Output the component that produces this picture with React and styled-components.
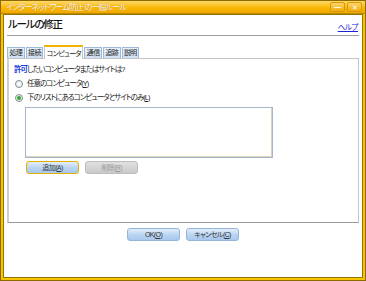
import React from "react";
import styled, { createGlobalStyle, css } from "styled-components";

const Global = createGlobalStyle`
  html, body { margin: 0; padding: 0; background: #fff; }
  * { box-sizing: border-box; }
  body {
    font-family: "Liberation Sans", "Noto Sans CJK JP", sans-serif;
    font-feature-settings: "palt";
  }
`;

const Frame = styled.div`
  width: 366px;
  height: 281px;
  display: flex;
  flex-direction: column;
  background: #f6c400;
  border: 1px solid #8d6a00;
  padding: 0 2px 2px 2px;
`;

const TitleBar = styled.div`
  height: 13px;
  display: flex;
  align-items: center;
  justify-content: space-between;
  margin: 0 -2px;
  padding: 0 3px 0 5px;
  background: linear-gradient(#ffd86a, #f9b600 60%, #f2a800);
  border-bottom: 1px solid #b88a00;
`;

const TitleText = styled.span`
  font-size: 8px;
  line-height: 13px;
  color: #fff;
  text-shadow: 0 0 1px #b07000;
  letter-spacing: -0.85px;
`;

const WinButtons = styled.div`
  display: flex;
  gap: 2px;
`;

const WinBtn = styled.div`
  width: 15px;
  height: 10px;
  border: 1px solid #d89a00;
  border-radius: 2px;
  background: linear-gradient(#ffd36a, #f2ac10);
  display: flex;
  align-items: center;
  justify-content: center;
  color: #fff;
  font-size: 7px;
  line-height: 1;
`;

const Content = styled.div`
  flex: 1;
  background: #fff;
  border: 1px solid #9a7400;
  padding: 0 3px;
  display: flex;
  flex-direction: column;
`;

const Header = styled.div`
  display: flex;
  justify-content: space-between;
  align-items: flex-end;
  height: 21px;
  padding: 0 0 2px 1px;
  border-bottom: 1px solid #a0a0a0;
`;

const Heading = styled.h1`
  margin: 0 0 2px 0;
  font-size: 10.5px;
  font-weight: 500;
  line-height: 13px;
  color: #111;
  letter-spacing: -1.2px;
`;

const HelpLink = styled.a`
  font-size: 7.5px;
  line-height: 10px;
  color: #2020e0;
  text-decoration: underline;
  margin-right: 1px;
  letter-spacing: -0.4px;
`;

const Tabs = styled.div`
  display: flex;
  align-items: flex-end;
  margin-top: 8px;
  height: 14px;
  gap: 1px;
`;

const Tab = styled.div`
  height: 11px;
  padding: 0 1.5px;
  font-size: 7px;
  line-height: 10px;
  color: #222;
  letter-spacing: -0.7px;
  background: linear-gradient(#e8f1fb, #cfe0f3);
  border: 1px solid #9fb8d6;
  border-bottom: none;
  ${(p) =>
    p.$active &&
    css`
      height: 14px;
      line-height: 13px;
      background: #fff;
      border: 1px solid #c8c8c8;
      border-top: 2px solid #f3b400;
      border-bottom: none;
      margin-bottom: -1px;
      position: relative;
      z-index: 1;
    `}
`;

const Panel = styled.div`
  height: 165px;
  border: 1px solid #c4c4c4;
  border-left: 2px solid #cfcfcf;
  border-bottom: 1px solid #9a9a9a;
  padding: 5px 5px 0 5px;
  display: flex;
  flex-direction: column;
`;

const Question = styled.div`
  font-size: 7.5px;
  line-height: 11px;
  color: #222;
  letter-spacing: -1px;
`;

const Strong = styled.span`
  color: #1a3de0;
  font-weight: 700;
`;

const RadioRow = styled.label`
  display: flex;
  align-items: center;
  gap: 4px;
  margin-top: ${(p) => p.$mt}px;
  font-size: 7.5px;
  line-height: 11px;
  color: #222;
  letter-spacing: -1px;
`;

const Radio = styled.span`
  width: 8px;
  height: 8px;
  margin-left: 1px;
  border-radius: 50%;
  border: 1px solid #7f8c99;
  background: radial-gradient(#fff, #e6e6e6);
  display: flex;
  align-items: center;
  justify-content: center;
  &::after {
    content: "";
    width: 4px;
    height: 4px;
    border-radius: 50%;
    background: ${(p) => (p.$checked ? "#2fa82f" : "transparent")};
  }
`;

const ListBox = styled.div`
  width: 248px;
  height: 51px;
  margin: 4px 0 0 11px;
  border: 1px solid #a6b6ca;
  box-shadow: inset -1px -1px 0 #d8d2bf;
  background: #fff;
`;

const ButtonRow = styled.div`
  display: flex;
  gap: ${(p) => p.$gap}px;
  margin: ${(p) => p.$margin};
  justify-content: ${(p) => p.$justify || "flex-start"};
`;

const Button = styled.button`
  width: 53px;
  height: 13px;
  padding: 0;
  font-family: inherit;
  font-feature-settings: "palt";
  font-size: 7px;
  line-height: 11px;
  letter-spacing: -0.6px;
  color: #333;
  border-radius: 3px;
  border: 1px solid #95b4da;
  background: linear-gradient(#e3eefb, #b9d3f1 55%, #a9c8ee);
  ${(p) =>
    p.$focused &&
    css`
      border-color: #e2b000;
    `}
  ${(p) =>
    p.disabled &&
    css`
      color: #9a9a9a;
      border-color: #bdbdbd;
      background: linear-gradient(#e0e0e0, #c9c9c9);
    `}
`;

export default function App() {
  return (
    <>
      <Global />
      <Frame>
        <TitleBar>
          <TitleText>インターネットワーム防止 の一般ルール</TitleText>
          <WinButtons>
            <WinBtn>━</WinBtn>
            <WinBtn>✕</WinBtn>
          </WinButtons>
        </TitleBar>
        <Content>
          <Header>
            <Heading>ルールの修正</Heading>
            <HelpLink href="#">ヘルプ</HelpLink>
          </Header>
          <Tabs>
            <Tab>処理</Tab>
            <Tab>接続</Tab>
            <Tab $active>コンピュータ</Tab>
            <Tab>通信</Tab>
            <Tab>追跡</Tab>
            <Tab>説明</Tab>
          </Tabs>
          <Panel>
            <Question>
              <Strong>許可</Strong>したいコンピュータまたはサイトは?
            </Question>
            <RadioRow $mt={3}>
              <Radio />
              <span>
                任意のコンピュータ(<u>Y</u>)
              </span>
            </RadioRow>
            <RadioRow $mt={3}>
              <Radio $checked />
              <span>
                下のリストにあるコンピュータとサイトのみ(<u>L</u>)
              </span>
            </RadioRow>
            <ListBox />
            <ButtonRow $gap={6} $margin="3px 0 0 12px">
              <Button $focused>
                追加(<u>A</u>)
              </Button>
              <Button disabled>
                削除(<u>R</u>)
              </Button>
            </ButtonRow>
          </Panel>
          <ButtonRow $gap={6} $margin="5px 0 0 0" $justify="center">
            <Button>
              OK(<u>O</u>)
            </Button>
            <Button>
              キャンセル(<u>C</u>)
            </Button>
          </ButtonRow>
        </Content>
      </Frame>
    </>
  );
}
